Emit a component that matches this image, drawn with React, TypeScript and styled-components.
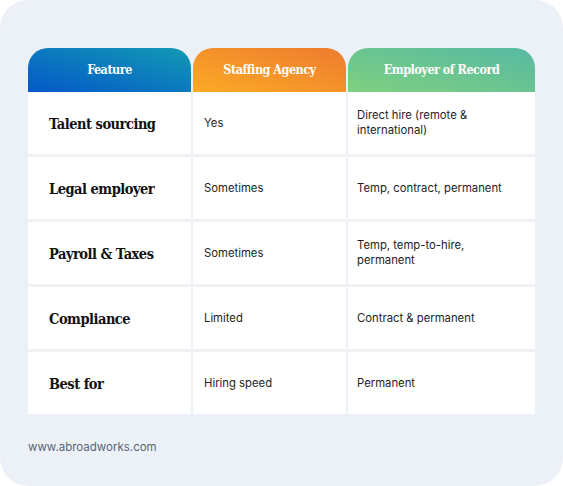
import React from "react";
import styled, { createGlobalStyle } from "styled-components";

const GlobalStyle = createGlobalStyle`
  html, body {
    margin: 0;
    padding: 0;
    background: #ffffff;
  }
  * {
    box-sizing: border-box;
  }
`;

const Card = styled.div`
  width: 563px;
  height: 486px;
  background: #ecf1f8;
  border-radius: 28px;
  padding: 48px 28px 0;
  font-family: Inter, "Liberation Sans", sans-serif;
`;

const Table = styled.div`
  width: 507px;
  display: flex;
  flex-direction: column;
`;

const Row = styled.div<{ $first?: boolean }>`
  display: grid;
  grid-template-columns: 163px 153px 187px;
  column-gap: 2px;
  border-top: ${(p) => (p.$first ? "0" : "3px solid #f0f1f4")};
`;

const HeadCell = styled.div<{ $from: string; $to: string }>`
  height: 44px;
  display: flex;
  align-items: center;
  justify-content: center;
  padding-bottom: 1px;
  border-radius: 20px 20px 0 0;
  background: linear-gradient(to top right, ${(p) => p.$from}, ${(p) => p.$to});
  color: #ffffff;
  font-family: "DejaVu Serif", "Liberation Serif", serif;
  font-stretch: condensed;
  font-size: 12.5px;
  font-weight: 700;
  letter-spacing: -0.5px;
`;

const Cell = styled.div<{ $pad: number }>`
  height: 62px;
  background: #ffffff;
  display: flex;
  align-items: center;
  padding: 0 20px 0 ${(p) => p.$pad}px;
  font-size: 11.3px;
  line-height: 15px;
  color: #1e1e1e;
`;

const FeatureCell = styled(Cell)`
  font-family: "DejaVu Serif", "Liberation Serif", serif;
  font-stretch: condensed;
  font-size: 14.5px;
  font-weight: 700;
  letter-spacing: -0.5px;
  color: #111111;
`;

const Footer = styled.div`
  margin-top: 26px;
  font-size: 11.5px;
  color: #5a6477;
`;

const rows = [
  ["Talent sourcing", "Yes", "Direct hire (remote & international)"],
  ["Legal employer", "Sometimes", "Temp, contract, permanent"],
  ["Payroll & Taxes", "Sometimes", "Temp, temp-to-hire, permanent"],
  ["Compliance", "Limited", "Contract & permanent"],
  ["Best for", "Hiring speed", "Permanent"],
];

export default function App() {
  return (
    <>
      <GlobalStyle />
      <Card>
        <Table>
          <Row $first>
            <HeadCell $from="#0558c9" $to="#129ab4">Feature</HeadCell>
            <HeadCell $from="#fbaa25" $to="#ee7b2f">Staffing Agency</HeadCell>
            <HeadCell $from="#7fd07f" $to="#56b9a3">Employer of Record</HeadCell>
          </Row>
          {rows.map((r, i) => (
            <Row key={r[0]} $first={i === 0}>
              <FeatureCell $pad={21}>{r[0]}</FeatureCell>
              <Cell $pad={11}>{r[1]}</Cell>
              <Cell $pad={9}>{r[2]}</Cell>
            </Row>
          ))}
        </Table>
        <Footer>www.abroadworks.com</Footer>
      </Card>
    </>
  );
}
